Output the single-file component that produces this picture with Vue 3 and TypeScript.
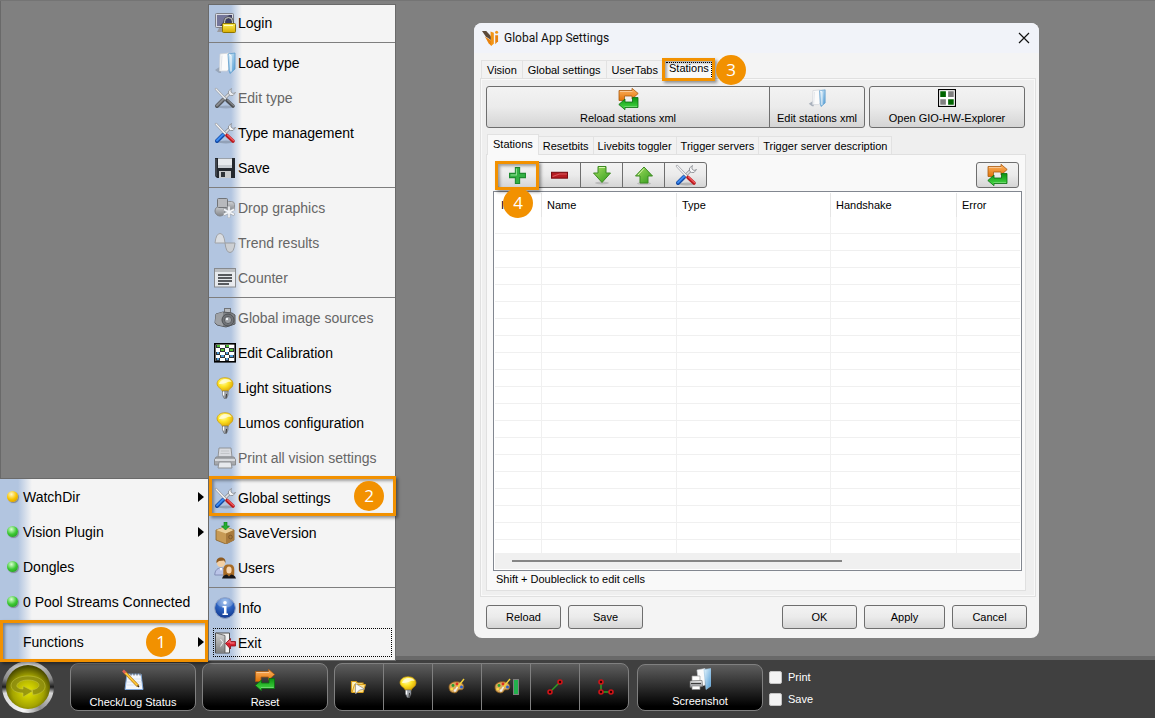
<script setup lang="ts">
import { ref } from 'vue'

interface MenuEntry {
  label: string
  icon: string
  disabled?: boolean
  marker?: string
  focused?: boolean
}

const functionGroups: MenuEntry[][] = [
  [{ label: 'Login', icon: 'login' }],
  [
    { label: 'Load type', icon: 'folder' },
    { label: 'Edit type', icon: 'tools', disabled: true },
    { label: 'Type management', icon: 'tools' },
    { label: 'Save', icon: 'floppy' },
  ],
  [
    { label: 'Drop graphics', icon: 'shapes', disabled: true },
    { label: 'Trend results', icon: 'wave', disabled: true },
    { label: 'Counter', icon: 'list', disabled: true },
  ],
  [
    { label: 'Global image sources', icon: 'camera', disabled: true },
    { label: 'Edit Calibration', icon: 'calibration' },
    { label: 'Light situations', icon: 'bulb' },
    { label: 'Lumos configuration', icon: 'bulb' },
    { label: 'Print all vision settings', icon: 'printer', disabled: true },
  ],
  [
    { label: 'Global settings', icon: 'tools', marker: '2' },
    { label: 'SaveVersion', icon: 'box' },
    { label: 'Users', icon: 'users' },
  ],
  [
    { label: 'Info', icon: 'info' },
    { label: 'Exit', icon: 'exit', focused: true },
  ],
]

const statusItems = [
  { label: 'WatchDir', led: 'amber', arrow: true },
  { label: 'Vision Plugin', led: 'green', arrow: true },
  { label: 'Dongles', led: 'green', arrow: false },
  { label: '0 Pool Streams Connected', led: 'green', arrow: false },
]

const mainTabs = ['Vision', 'Global settings', 'UserTabs', 'Stations']
const stationTabs = ['Stations', 'Resetbits', 'Livebits toggler', 'Trigger servers', 'Trigger server description']
const mainTab = ref('Stations')
const stationTab = ref('Stations')

const rowTools = [
  { icon: 'plus', label: 'Add station', marker: '4' },
  { icon: 'minus', label: 'Remove station' },
  { icon: 'down', label: 'Move down' },
  { icon: 'up', label: 'Move up' },
  { icon: 'tools', label: 'Configure station' },
]
const barTools = [
  { icon: 'run', label: 'Open and run' },
  { icon: 'bulb', label: 'Light' },
  { icon: 'palette', label: 'Palette' },
  { icon: 'palettebar', label: 'Palette bar' },
  { icon: 'line', label: 'Line' },
  { icon: 'angle', label: 'Angle' },
]
const columns = ['ID', 'Name', 'Type', 'Handshake', 'Error']
const emptyRows = 60
const printShot = ref(false)
const saveShot = ref(false)
</script>

<template>
  <svg class="sprite" aria-hidden="true">
    <defs>
      <linearGradient id="gOrange" x1="0" y1="0" x2="0" y2="1"><stop offset="0" stop-color="#ffb464" /><stop offset="1" stop-color="#e07408" /></linearGradient>
      <linearGradient id="gGreen" x1="0" y1="0" x2="0" y2="1"><stop offset="0" stop-color="#0c9210" /><stop offset="1" stop-color="#4be04a" /></linearGradient>
      <linearGradient id="gArrow" x1="0" y1="0" x2="1" y2="1"><stop offset="0" stop-color="#a6e060" /><stop offset="1" stop-color="#2f9a1c" /></linearGradient>
      <linearGradient id="gSteel" x1="0" y1="0" x2="0" y2="1"><stop offset="0" stop-color="#fdfdfd" /><stop offset="1" stop-color="#8a8d92" /></linearGradient>
      <linearGradient id="gDark" x1="0" y1="0" x2="0" y2="1"><stop offset="0" stop-color="#d4d4d4" /><stop offset="1" stop-color="#7c7c7c" /></linearGradient>
      <linearGradient id="gGold" x1="0" y1="0" x2="0" y2="1"><stop offset="0" stop-color="#fff25a" /><stop offset="1" stop-color="#d8ac00" /></linearGradient>
      <linearGradient id="gFold" x1="0" y1="0" x2="1" y2="1"><stop offset="0" stop-color="#e4f4fd" /><stop offset="1" stop-color="#4c98d2" /></linearGradient>
      <radialGradient id="gBulb" cx=".4" cy=".3" r=".7"><stop offset="0" stop-color="#fffbc0" /><stop offset=".45" stop-color="#ffe628" /><stop offset="1" stop-color="#dca400" /></radialGradient>
      <radialGradient id="gInfo" cx=".5" cy=".2" r=".8"><stop offset="0" stop-color="#8fb8ec" /><stop offset=".5" stop-color="#2c62c0" /><stop offset="1" stop-color="#12388e" /></radialGradient>
    </defs>

    <symbol id="i-login" viewBox="0 0 22 22">
      <path d="M5 16h7l1 4H3z" fill="#9a9a9e" />
      <rect x="1.500" y="1.500" width="18" height="14" rx="1" fill="#d8dae2" stroke="#7e8088" />
      <rect x="3" y="3" width="15" height="11" fill="#3c3e66" />
      <path d="M3 3h12L6 14H3z" fill="#74769a" />
      <path d="M10.500 13V9.500a4 4 0 0 1 8 0V13" fill="none" stroke="#55565a" stroke-width="2.600" />
      <path d="M10.500 13V9.500a4 4 0 0 1 8 0V13" fill="none" stroke="#c9cace" stroke-width="1" />
      <rect x="8.500" y="11.500" width="13" height="9" rx="1" fill="url(#gGold)" stroke="#8e7400" />
      <path d="M10 13.500h9" stroke="#fffac0" />
    </symbol>
    <symbol id="i-folder" viewBox="0 0 22 22">
      <path d="M1 18l6-4v7H5z" fill="#8d98a8" opacity=".7" />
      <path d="M6 2l9-1v16l-2 2H5.500z" fill="#fbfbfb" stroke="#cfd3d8" stroke-width=".8" />
      <path d="M8 3.500L7 18" stroke="#dfe3e8" />
      <path d="M14 2l7-1v16l-5 4.500-1-3z" fill="url(#gFold)" stroke="#5d9ccc" stroke-width=".8" />
      <path d="M15 2.500l2 1v16" fill="none" stroke="#fff" />
    </symbol>
    <symbol id="i-tools" viewBox="0 0 22 22">
      <ellipse cx="12" cy="20" rx="8" ry="1.500" fill="#000" opacity=".18" />
      <path d="M10 12l6-6" stroke="#85888d" stroke-width="3" />
      <path d="M10 12l6-6" stroke="#e4e6e9" stroke-width="1.700" />
      <path d="M17.500 1.500l-3 2.500v3l2 1.500h2.500l2.500-3-2.500 1-2-1.500v-2z" fill="#f4f5f6" stroke="#85888e" stroke-width=".8" />
      <path d="M9 13l-6 6" stroke="#1248a4" stroke-width="4" stroke-linecap="round" />
      <path d="M9 12.500l-6 6" stroke="#3c8cf2" stroke-width="2" stroke-linecap="round" />
      <path d="M2 2l10 10.500" stroke="#83868b" stroke-width="2.400" stroke-linecap="round" />
      <path d="M2 2l10 10.500" stroke="#f6f6f8" stroke-width="1.400" stroke-linecap="round" />
      <path d="M13 13.500l6 5.500" stroke="#b8191e" stroke-width="3.600" stroke-linecap="round" />
      <path d="M13.500 13l6 5.500" stroke="#f0585c" stroke-width="1.400" stroke-linecap="round" />
    </symbol>
    <symbol id="i-floppy" viewBox="0 0 22 22">
      <path d="M1 1h20v20H3l-2-2z" fill="#24282e" />
      <path d="M4 1h14v10H4z" fill="#e6e9ec" />
      <path d="M4 8h14v3H4z" fill="#c8cdd2" />
      <path d="M4 1.500h14" stroke="#9ba2aa" />
      <rect x="5" y="14" width="12" height="7" fill="#c9cbcd" />
      <rect x="7" y="15" width="4" height="5" fill="#2f3338" />
      <path d="M2 2v17" stroke="#5c636d" />
    </symbol>
    <symbol id="i-shapes" viewBox="0 0 22 22">
      <circle cx="6" cy="14" r="5" fill="url(#gDark)" stroke="#777" />
      <rect x="11.500" y="4.500" width="9" height="9" rx="3" fill="url(#gDark)" stroke="#888" />
      <rect x="3.500" y="1.500" width="10" height="9" rx="1" fill="#b8b8b8" stroke="#666" />
      <path d="M15 9v12M9.500 12l11 6M20.500 12l-11 6" stroke="#a8a8a8" stroke-width="2.600" />
      <path d="M15 9.500v11M10 12.500l10 5M20 12.500l-10 5" stroke="#fff" stroke-width="1.600" />
    </symbol>
    <symbol id="i-wave" viewBox="0 0 22 22">
      <path d="M1 11Q2 1.500 6 1.500T11 11z" fill="#e2e3e5" stroke="#9a9da2" />
      <path d="M11 11Q12 20.500 16 20.500T21 11z" fill="#d0d1d3" stroke="#94979c" />
    </symbol>
    <symbol id="i-list" viewBox="0 0 22 22">
      <rect x=".5" y="1.500" width="21" height="18.500" fill="#f0f0f0" stroke="#808080" />
      <path d="M1 3.500h20" stroke="#bdbdbd" stroke-width="3" />
      <path d="M4 8h14M4 11h14M4 14h14M4 17h11" stroke="#484848" stroke-width="2" />
    </symbol>
    <symbol id="i-camera" viewBox="0 0 22 22">
      <rect x="10.500" y="1.500" width="6" height="4" fill="#bbb" stroke="#666" />
      <path d="M2 7l7-2 9 1 3 2v9l-9 3-9-2-2-2z" fill="#7a7a7a" stroke="#484848" />
      <path d="M2 7l7-2v14l-6-1.500-2-2z" fill="#9c9c9c" />
      <circle cx="14" cy="13" r="6" fill="#666" stroke="#3c3c3c" />
      <circle cx="14" cy="13" r="3.600" fill="#989898" stroke="#4c4c4c" />
      <circle cx="13" cy="12" r="1.200" fill="#fff" />
    </symbol>
    <symbol id="i-calibration" viewBox="0 0 22 22">
      <rect x=".8" y="1.800" width="20.400" height="18" fill="#fff" stroke="#000" stroke-width="1.600" />
      <path d="M2 3h4v3H2zM11 3h4v3h-4zM6 6h5v4H6zM15 6h5v4h-5zM2 10h4v3H2zM11 10h4v3h-4zM6 13h5v3H6zM15 13h5v3h-5zM2 16h4v3H2zM11 16h4v3h-4z" fill="#30363c" />
      <path d="M3 3h3v2H3zM12 3h3v2h-3zM7 7h3v2H7zM16 7h3v2h-3z" fill="#54c032" />
      <path d="M3 10h2v2H3zM12 10h2v2h-2zM7 13h3v2H7zM16 13h3v2h-3zM3 16h2v2H3zM12 16h2v2h-2z" fill="#4f9bd8" />
    </symbol>
    <symbol id="i-bulb" viewBox="0 0 22 22">
      <path d="M11 .7c5 0 8 2.800 8 6.300 0 4-4.500 4.500-5.300 8H8.800C8 11.500 3 10.500 3 7 3 3.500 6 .7 11 .7z" fill="url(#gBulb)" stroke="#c99a10" stroke-width=".7" />
      <path d="M5 7c1-3.500 4-5 7-5 3 0 5 1 5.500 3-3-1.500-6 2-12.500 2z" fill="#fffde0" opacity=".8" />
      <path d="M8.500 14h5.500v4l-1.500 3.500h-2.300L8.500 18z" fill="#9fa3a9" stroke="#5e6166" stroke-width=".6" />
      <path d="M9.500 14.500v4" stroke="#fff" stroke-width="1.400" />
      <path d="M12.500 17l-.5 4" stroke="#333" />
    </symbol>
    <symbol id="i-printer" viewBox="0 0 22 22">
      <path d="M5 1h12l1 9H4z" fill="#e0e0e0" stroke="#8a8a8a" />
      <path d="M7 4h8M6.500 6.500h9" stroke="#c5c5c5" />
      <path d="M2 10h18l1.500 3v5h-21v-5z" fill="#a4a4a4" stroke="#808080" />
      <path d="M1 13h20" stroke="#dedede" stroke-width="2" />
      <path d="M5 15h12l1 6H4z" fill="#f0f0f0" stroke="#888" />
    </symbol>
    <symbol id="i-box" viewBox="0 0 22 22">
      <path d="M2 8l9-3 9 3v10l-8 4-10-4z" fill="#c79a55" stroke="#85602a" stroke-width=".8" />
      <path d="M2 8l9-3 9 3-8 3.500z" fill="#ecd09a" />
      <path d="M12 11.500L20 8v10l-8 4z" fill="#a87a3c" />
      <circle cx="16.500" cy="15" r="1.800" fill="none" stroke="#80592a" />
      <path d="M10 0h3v4h2.500l-4 4-4-4H10z" fill="#24b032" stroke="#0b761a" stroke-width=".6" />
    </symbol>
    <symbol id="i-users" viewBox="0 0 22 22">
      <path d="M.8 18c0-5 3-7 6.200-7 3.500 0 6 2 6 7z" fill="#bac4e8" stroke="#7680ac" stroke-width=".8" />
      <path d="M5.500 11L7 14l1.500-3z" fill="#fff" />
      <circle cx="7" cy="6" r="4" fill="#f3cfa4" />
      <path d="M2.500 6c-.5-4 2-5.500 4.500-5.500S12 2 11.500 6L10 3.500 5 4z" fill="#8e5a20" />
      <path d="M9.500 19.500c-1-11 1-12 5.500-12s6 1 5 12z" fill="#a86b24" />
      <ellipse cx="15" cy="13" rx="2.600" ry="3.500" fill="#f6d4b0" />
      <path d="M8 21.500c1-3 3-4 5-4l2 2 2-2c2 0 4 1 5 4z" fill="#16161a" />
    </symbol>
    <symbol id="i-info" viewBox="0 0 22 22">
      <circle cx="11" cy="11" r="10.400" fill="url(#gInfo)" stroke="#94a4c4" />
      <ellipse cx="11" cy="6" rx="8" ry="4.500" fill="#fff" opacity=".22" />
      <circle cx="11" cy="5.800" r="1.800" fill="#fff" />
      <path d="M8.500 9h4v7.500h1.500v1.500H8.500v-1.500H10V10.500H8.500z" fill="#fff" />
    </symbol>
    <symbol id="i-exit" viewBox="0 0 22 22">
      <path d="M1.500 1h14v20h-14z" fill="#f2f2f2" stroke="#4c4c4c" />
      <path d="M2 1l9 2.500V21H2z" fill="url(#gDark)" />
      <path d="M2 1l9 2.500V21" fill="none" stroke="#555" stroke-width=".8" />
      <path d="M6.500 7l2.500 3.500-2.500 4" fill="none" stroke="#eee" />
      <path d="M11.500 11.500l5-5v3h5v4.500h-5v3z" fill="#d81f2e" stroke="#8a0a14" stroke-width=".8" />
      <path d="M13.500 11l2.500-2.500V11h4.500" fill="none" stroke="#f7858c" />
    </symbol>
    <symbol id="i-sync" viewBox="0 0 20 22">
      <path d="M.5 2.500h13V.3l6.200 5.200-6.200 5.500V8H6v4.500H.5z" fill="url(#gOrange)" stroke="#a85a10" stroke-width=".8" />
      <path d="M19.500 19.500h-13v2.200L.3 16.500l6.200-5.500v3H14V9.500h5.500z" fill="url(#gGreen)" stroke="#0a6c10" stroke-width=".8" />
      <path d="M1.500 3.500H14" stroke="#fff" opacity=".4" />
      <path d="M6 18.500h12.500" stroke="#fff" opacity=".25" />
    </symbol>
    <symbol id="i-plus" viewBox="0 0 16 16">
      <path d="M6 .5h4V6h5.500v4H10v5.500H6V10H.5V6H6z" fill="#34b044" stroke="#1d8a2f" />
      <path d="M7 1.500v6H1.500" fill="none" stroke="#8fe094" />
    </symbol>
    <symbol id="i-minus" viewBox="0 0 16 16">
      <rect x=".5" y="5" width="15" height="5.500" fill="#b81c22" stroke="#7a0d12" />
      <path d="M1.500 9L8 6.500h7" fill="none" stroke="#d8585c" />
    </symbol>
    <symbol id="i-down" viewBox="0 0 20 20">
      <ellipse cx="10" cy="18" rx="7" ry="1.500" fill="#000" opacity=".15" />
      <path d="M6 1.500h8V8h4.500L10 17.500 1.500 8H6z" fill="url(#gArrow)" stroke="#3c8a22" />
      <path d="M7 2.500h6" stroke="#d8f5b0" />
    </symbol>
    <symbol id="i-up" viewBox="0 0 20 20">
      <ellipse cx="10" cy="18.500" rx="7" ry="1.300" fill="#000" opacity=".15" />
      <path d="M6 18v-7H1.500L10 2l8.500 9H14v7z" fill="url(#gArrow)" stroke="#3c8a22" />
      <path d="M4 10l6-6.500" stroke="#d8f5b0" />
    </symbol>
    <symbol id="i-hw" viewBox="0 0 16 16">
      <rect x=".5" y=".5" width="15" height="15" fill="#fff" stroke="#000" />
      <path d="M2 2h5v5H2zM9 9h5v5H9z" fill="#006400" />
      <path d="M9 2h5v5H9zM2 9h5v5H2z" fill="#808080" />
    </symbol>
    <symbol id="i-notepad" viewBox="0 0 22 22">
      <path d="M5 5h14l2 15.500H3z" fill="#f4f7fc" stroke="#7fa6d8" />
      <path d="M5.500 10h14M5 13h15M4.500 16h15.500" stroke="#d3deee" stroke-width=".8" />
      <path d="M9 3.500v3M12 3.500v3M15 3.500v3M18 3.500v3" stroke="#555" />
      <path d="M3 3.500L16 17" stroke="#b87812" stroke-width="3" />
      <path d="M3 3.500L16 17" stroke="#ffcb3c" stroke-width="1.800" />
      <path d="M1 1.500l2.500 2.500" stroke="#e06052" stroke-width="2.600" />
      <path d="M15.500 16.500l1.500 1.500" stroke="#3b2a14" stroke-width="1.400" />
    </symbol>
    <symbol id="i-run" viewBox="0 0 22 22">
      <path d="M3.500 5.500H8L9.500 7H15v9H3.500z" fill="#fff4c0" stroke="#d9a01c" stroke-width="1.200" />
      <path d="M6.500 8.500h11l-2.500 8H4z" fill="#ffe08a" stroke="#d9a01c" />
      <path d="M7.500 7.500l9 5.500-5 1-4 4z" fill="#fafafa" stroke="#8a8a8a" stroke-width=".7" />
    </symbol>
    <symbol id="i-palette" viewBox="0 0 22 22">
      <path d="M3 11c0-4 5-6 10-5 4 1 6 4 4 7-1.500 1.500-4 0-5 1.500-.5 2-3 3-5.500 2C4 16 3 13.500 3 11z" fill="#dba95c" stroke="#875a1c" stroke-width=".8" />
      <circle cx="7" cy="9.500" r="1.400" fill="#28a030" /><circle cx="11" cy="8" r="1.400" fill="#e03020" />
      <circle cx="5.800" cy="13" r="1.300" fill="#ffe040" /><circle cx="15.500" cy="11" r="1.500" fill="#2c60c8" /><circle cx="9" cy="14.500" r="1.300" fill="#eee" />
      <path d="M18 3l-8 10" stroke="#f4d23c" stroke-width="1.400" /><path d="M11.500 11L9.500 14" stroke="#eee" stroke-width="1.400" />
    </symbol>
    <symbol id="i-palettebar" viewBox="0 0 28 22">
      <use href="#i-palette" x="0" y="0" width="22" height="22" />
      <rect x="21.500" y="3.500" width="5" height="15" fill="#22b04c" stroke="#7f7f7f" />
    </symbol>
    <symbol id="i-line" viewBox="0 0 22 22">
      <path d="M6 16L16 6" stroke="#2f9e24" stroke-width="1.500" />
      <circle cx="6" cy="16" r="2" fill="#300" stroke="#d01418" stroke-width="1.600" /><circle cx="16" cy="6" r="2" fill="#300" stroke="#d01418" stroke-width="1.600" />
    </symbol>
    <symbol id="i-angle" viewBox="0 0 22 22">
      <path d="M8 6v10h10" fill="none" stroke="#2f9e24" stroke-width="1.500" />
      <circle cx="8" cy="6" r="2" fill="#300" stroke="#d01418" stroke-width="1.600" /><circle cx="8" cy="16" r="2" fill="#300" stroke="#d01418" stroke-width="1.600" /><circle cx="18" cy="16" r="2" fill="#300" stroke="#d01418" stroke-width="1.600" />
    </symbol>
    <symbol id="i-shot" viewBox="0 0 22 22">
      <path d="M8 2l8-1.500V17l-6 2z" fill="#fafafa" stroke="#ccd2d8" stroke-width=".6" />
      <path d="M15 1.500l7-1V18l-5 3.500z" fill="url(#gFold)" stroke="#9cc4e0" stroke-width=".6" />
      <path d="M3 8h8v5H3z" fill="#fff" stroke="#999" stroke-width=".7" />
      <path d="M1 13l12-.5.5 6L1 19.500z" fill="url(#gSteel)" stroke="#666" stroke-width=".7" />
      <path d="M2 15.500h10" stroke="#3c3c3c" stroke-width="1.300" />
      <path d="M3 18h8v3.500H3z" fill="#fff" stroke="#888" stroke-width=".7" />
    </symbol>
  </svg>

  <div class="screen">
    <main class="desktop">
      <section class="dialog" role="dialog" aria-labelledby="dlgTitle">
        <header class="titlebar">
          <svg class="logo" viewBox="0 0 18 18" aria-hidden="true">
            <path d="M0 1h4.500l5 5.500v4L4 7z" fill="#5c4a3a" />
            <path d="M3 7l7 4.500V17l-3-3z" fill="#e8820e" />
            <path d="M9 1.500l3.500 1.500v11.500L9.500 17z" fill="#f29414" />
            <path d="M14 5.500h3V12l-3 3z" fill="#e8820e" />
            <circle cx="15.500" cy="2.500" r="1.600" fill="#f29414" />
          </svg>
          <h1 id="dlgTitle">Global App Settings</h1>
          <button class="close" aria-label="Close"><svg viewBox="0 0 12 12"><path d="M1 1l10 10M11 1L1 11" stroke="#111" stroke-width="1.200" /></svg></button>
        </header>

        <div class="tabs main-tabs" role="tablist">
          <button v-for="t in mainTabs" :key="t" role="tab" class="tab" :class="{ active: mainTab === t }" :aria-selected="mainTab === t" @click="mainTab = t">
            {{ t }}
            <span v-if="t === 'Stations'" class="frame" aria-hidden="true"></span>
            <span v-if="t === 'Stations'" class="badge">3</span>
          </button>
        </div>

        <div class="panel outer">
          <div class="actions">
            <div class="joined">
              <button class="btn tall reload"><svg class="sync"><use href="#i-sync" /></svg>Reload stations xml</button>
              <button class="btn tall edit"><svg class="small"><use href="#i-folder" /></svg>Edit stations xml</button>
            </div>
            <button class="btn tall explorer"><svg class="small"><use href="#i-hw" /></svg>Open GIO-HW-Explorer</button>
          </div>

          <div class="tabs sub-tabs" role="tablist">
            <button v-for="t in stationTabs" :key="t" role="tab" class="tab" :class="{ active: stationTab === t }" :aria-selected="stationTab === t" @click="stationTab = t">{{ t }}</button>
          </div>

          <div class="panel inner">
            <div class="toolrow">
              <div class="joined">
                <button v-for="r in rowTools" :key="r.icon" class="btn tool" :aria-label="r.label">
                  <svg :class="r.icon"><use :href="'#i-' + r.icon" /></svg>
                  <template v-if="r.marker">
                    <span class="frame" aria-hidden="true"></span>
                    <span class="badge">{{ r.marker }}</span>
                  </template>
                </button>
              </div>
              <button class="btn tool" aria-label="Refresh"><svg class="sync"><use href="#i-sync" /></svg></button>
            </div>

            <div class="grid">
              <div class="grid-view">
                <table>
                  <colgroup><col class="c-id" /><col class="c-name" /><col class="c-type" /><col class="c-hand" /><col /></colgroup>
                  <thead><tr><th v-for="c in columns" :key="c" scope="col">{{ c }}</th></tr></thead>
                  <tbody><tr v-for="n in emptyRows" :key="n"><td v-for="c in columns" :key="c"></td></tr></tbody>
                </table>
              </div>
              <div class="scroll"><div class="thumb"></div></div>
            </div>
            <p class="hint">Shift + Doubleclick to edit cells</p>
          </div>
        </div>

        <footer class="buttons">
          <button class="btn">Reload</button>
          <button class="btn">Save</button>
          <span class="spacer"></span>
          <button class="btn">OK</button>
          <button class="btn apply">Apply</button>
          <button class="btn">Cancel</button>
        </footer>
      </section>
    </main>

    <nav class="menu status-menu" aria-label="Status">
      <ul>
        <li v-for="s in statusItems" :key="s.label">
          <button class="item"><span class="led" :class="s.led"></span><span class="label">{{ s.label }}</span><svg v-if="s.arrow" class="arrow" viewBox="0 0 6 10"><path d="M0 0l6 5-6 5z" /></svg></button>
        </li>
      </ul>
      <ul>
        <li><button class="item"><span class="led"></span><span class="label">Functions</span><svg class="arrow" viewBox="0 0 6 10"><path d="M0 0l6 5-6 5z" /></svg><span class="frame" aria-hidden="true"></span><span class="badge">1</span></button></li>
      </ul>
    </nav>

    <nav class="menu function-menu" aria-label="Functions">
      <ul v-for="(g, i) in functionGroups" :key="i">
        <li v-for="e in g" :key="e.label">
          <button class="item" :class="{ focused: e.focused }" :disabled="e.disabled">
            <svg class="icon"><use :href="'#i-' + e.icon" /></svg><span class="label">{{ e.label }}</span>
            <template v-if="e.marker">
              <span class="frame" aria-hidden="true"></span>
              <span class="badge">{{ e.marker }}</span>
            </template>
          </button>
        </li>
      </ul>
    </nav>

    <footer class="taskbar">
      <button class="orb" aria-label="Cycle">
        <svg viewBox="0 0 42 42">
          <path d="M26 29c8-1 13-5 12-10-1-6-9-9-17-9S5 13 4 19c0 5 5 8 12 8v4l10-6-10-5v3c-4 0-7-2-6-4 1-3 6-5 11-5s11 2 11 5c0 2-2 4-7 5z" fill="#8e8e10" stroke="#c8c84a" stroke-width=".6" opacity=".85" />
        </svg>
      </button>
      <button class="dark wide"><svg class="icon"><use href="#i-notepad" /></svg>Check/Log Status</button>
      <button class="dark wide"><svg class="icon"><use href="#i-sync" /></svg>Reset</button>
      <div class="strip">
        <button v-for="b in barTools" :key="b.icon" class="dark" :aria-label="b.label"><svg :class="b.icon"><use :href="'#i-' + b.icon" /></svg></button>
      </div>
      <button class="dark wide shot"><svg class="icon"><use href="#i-shot" /></svg>Screenshot</button>
      <div class="checks">
        <label><input v-model="printShot" type="checkbox" />Print</label>
        <label><input v-model="saveShot" type="checkbox" />Save</label>
      </div>
    </footer>
  </div>
</template>

<style>
body { margin: 0; background: #808080; }
</style>

<style scoped>
* { box-sizing: border-box; }
button { font: inherit; color: inherit; margin: 0; padding: 0; border: 0; background: none; }
svg { display: block; flex: none; }
ul { list-style: none; margin: 0; padding: 0; }
.sprite { position: absolute; width: 0; height: 0; }

.screen {
  position: relative;
  display: flex;
  flex-direction: column;
  min-height: 100vh;
  background: #808080;
  border-top: 1px solid #747474;
  font: 11px/16px "Liberation Sans", Arial, sans-serif;
  color: #000;
}
.desktop {
  flex: 1;
  display: flex;
  flex-direction: column;
  padding: 22px 116px 18px 473px;
  border-left: 1px solid #696969;
  border-bottom: 4px solid #696969;
}

/* numbered markers */
.frame {
  position: absolute;
  border: 3px solid #f29100;
  box-shadow: 2px 2px 3px rgba(0, 0, 0, .4), inset 2px 2px 3px rgba(0, 0, 0, .35);
  pointer-events: none;
}
.badge {
  position: absolute;
  z-index: 2;
  width: 30px;
  height: 30px;
  border-radius: 50%;
  background: #f29100;
  color: #fff;
  font: 17px/30px "Open Sans", sans-serif;
  text-align: center;
}

/* dialog */
.dialog {
  flex: 1;
  display: flex;
  flex-direction: column;
  background: #f4f4f4;
  border-radius: 8px;
  padding: 0 3px 9px 6px;
}
.titlebar {
  display: flex;
  align-items: center;
  gap: 5px;
  height: 30px;
  margin: 0 -3px 0 -6px;
  padding: 0 9px 0 8px;
  background: #f1f3f9;
  border-radius: 8px 8px 0 0;
}
.logo { width: 17px; height: 17px; }
h1 { flex: 1; margin: 0; font: 12px/16px Roboto, "Segoe UI", sans-serif; color: #111; }
.close { width: 12px; height: 12px; }
.close svg { width: 12px; height: 12px; }

.tabs { display: flex; align-items: flex-end; position: relative; z-index: 1; }
.main-tabs { height: 25px; }
.tab {
  height: 18px;
  padding: 1px 5px 0;
  border: 1px solid #e2e2e2;
  border-bottom: 0;
  margin-left: -1px;
  background: #f2f2f2;
  line-height: 16px;
  position: relative;
}
.tab:first-child { margin-left: 1px; }
.tab.active { height: 21px; margin-bottom: -1px; background: #f9f9f9; padding-top: 0; padding-bottom: 2px; }
.main-tabs .active::after { content: ""; position: absolute; inset: 3px 2px 2px; border: 1px dotted #000; border-left: 0; border-bottom: 0; }
.tab .frame { left: -2px; top: -1px; right: -1px; bottom: -2px; z-index: 1; }
.tab .badge { left: 52px; top: -4px; }

.panel { display: flex; flex-direction: column; flex: 1; border: 2px solid #f9f9f9; outline: 1px solid #e0e0e0; outline-offset: -1px; }
.outer { background: #efefef; padding: 6px 9px 4px 4px; }
.actions { display: flex; gap: 4px; }
.joined { display: flex; }
.actions .joined { flex: 1; }
.btn {
  position: relative;
  display: flex;
  align-items: center;
  justify-content: center;
  height: 24px;
  width: 75px;
  border: 1px solid #6e6e6e;
  border-radius: 3px;
  background: linear-gradient(#f3f3f3, #ebebeb 50%, #d5d5d5);
}
.btn.tall { flex-direction: column; height: 42px; justify-content: flex-end; padding-bottom: 1px; }
.btn.tall .small { width: 18px; height: 18px; margin-bottom: 3px; }
.sync { width: 21px; height: 22px; }
.btn.reload { flex: 1; }
.btn.edit { width: 96px; }
.btn.explorer { width: 156px; }
.joined .btn:not(:first-child) { border-top-left-radius: 0; border-bottom-left-radius: 0; margin-left: -1px; }
.joined .btn:not(:last-child) { border-top-right-radius: 0; border-bottom-right-radius: 0; }

.sub-tabs { height: 26px; }
.sub-tabs .tab { padding-left: 4px; padding-right: 4px; }
.sub-tabs .tab:first-child { padding-left: 5px; padding-right: 5px; }
.inner { background: #f9f9f9; padding: 6px 2px 2px 5px; margin-right: -1px; }
.toolrow { display: flex; justify-content: space-between; padding: 0 3px; height: 26px; }
.btn.tool { width: 43px; height: 26px; }
.plus, .minus { width: 17px; height: 17px; }
.down, .up { width: 20px; height: 20px; }
.tools { width: 22px; height: 22px; }
.tool .frame { inset: -2px -1px -3px -2px; z-index: 1; }
.tool .badge { left: 6px; top: 25px; }

.grid { flex: 1; display: flex; flex-direction: column; margin-top: 3px; border: 1px solid #828790; background: #fff; padding: 1px; }
.grid-view { flex: 1 1 0; min-height: 120px; overflow: hidden; }
table { width: 100%; table-layout: fixed; border-collapse: separate; border-spacing: 0; }
.c-id { width: 47px; }
.c-name { width: 135px; }
.c-type { width: 154px; }
.c-hand { width: 126px; }
th { height: 24px; padding: 0 0 0 5px; font-weight: normal; text-align: left; border-right: 1px solid #e5e5e5; }
th:first-child { padding-left: 6px; }
td { height: 17px; padding: 0; border-right: 1px solid #f0f0f0; border-bottom: 1px solid #f0f0f0; }
th:last-child, td:last-child { border-right: 0; }
.scroll { height: 16px; background: #f0f0f0; padding: 7px 0 0 17px; }
.thumb { width: 65%; height: 2px; background: #868686; }
.hint { margin: 0; padding-left: 3px; height: 16px; }

.buttons { display: flex; gap: 7px; padding: 8px 9px 0 6px; }
.spacer { flex: 1; }
.btn.apply { width: 81px; }

/* menus */
.menu {
  position: absolute;
  bottom: 57px;
  border: 1px solid #6a6a6a;
  font-size: 14px;
  z-index: 3;
}
.status-menu { left: 0; bottom: 58px; width: 209px; border-left: 0; background: linear-gradient(90deg, #b2c5e0 18px, #f4f4f4 32px); }
.function-menu { left: 208px; width: 188px; background: linear-gradient(90deg, #b2c5e0 22px, #f4f4f4 33px); z-index: 4; }
.menu ul + ul { border-top: 1px solid #7e7e7e; margin-top: 2px; padding-top: 2px; }
.status-menu ul + ul { border-top-color: transparent; }
.item { position: relative; display: flex; align-items: center; width: 100%; height: 35px; text-align: left; }
.label { flex: 1; white-space: nowrap; }
.item:disabled { color: #666; }
.icon { width: 22px; height: 22px; }
.function-menu .icon { margin: 0 1px 0 5px; }
.function-menu .label { padding-left: 1px; }
.item:disabled .icon { filter: grayscale(1); opacity: .85; }
.focused::after { content: ""; position: absolute; inset: 3px 3px 3px 4px; border: 1px dotted #000; }
.led { width: 11px; height: 11px; margin: 0 5px 0 7px; border-radius: 50%; }
.amber { background: radial-gradient(circle at 40% 30%, #fff8c8, #f8c400 50%, #c68a00); box-shadow: 1px 1px 1px #7f8894; }
.green { background: radial-gradient(circle at 40% 30%, #d8ffd0, #3cc832 50%, #1c8a1c); box-shadow: 1px 1px 1px #7f8894; }
.arrow { width: 6px; height: 10px; margin-right: 4px; }
.function-menu .frame { inset: -4px -1px -1px 0; }
.function-menu .badge { right: 11px; top: 1px; }
.status-menu .frame { inset: -4px 0 -3px 0; }
.status-menu .badge { right: 32px; top: 3px; }

/* taskbar */
.taskbar { display: flex; align-items: center; gap: 6px; height: 58px; padding: 0 2px 4px; background: #404040; color: #fff; }
.orb {
  width: 52px;
  height: 52px;
  margin: 0 10px 0 0;
  border-radius: 50%;
  border: 4px solid transparent;
  background: radial-gradient(circle at 50% 60%, #e8e800, #a4a400 45%, #4a4a00 72%) padding-box, conic-gradient(#e8e8e8, #8a8a8a 70deg, #1c1c1c 90deg, #d8d8d8 105deg, #8e8e8e 150deg, #f4f4f4 190deg, #d8d8d8 255deg, #1c1c1c 270deg, #8a8a8a 290deg, #e8e8e8) border-box;
}
.orb svg { width: 42px; height: 42px; margin: 1px; }
.dark {
  display: flex;
  flex-direction: column;
  align-items: center;
  justify-content: center;
  height: 48px;
  border: 1px solid #808080;
  border-radius: 8px;
  background: linear-gradient(#5e5e5e, #000 92%);
}
.wide { width: 126px; justify-content: flex-end; gap: 3px; }
.wide .icon { width: 22px; height: 22px; }
.shot { height: 47px; margin-left: 2px; padding-bottom: 1px; }
.strip { display: flex; }
.strip .dark { width: 50px; border-radius: 0; margin-left: -1px; }
.strip .dark:first-child { margin-left: 0; border-radius: 8px 0 0 8px; }
.strip .dark:last-child { border-radius: 0 8px 8px 0; }
.strip svg { width: 22px; height: 22px; }
.strip .palettebar { width: 28px; }
.checks { display: flex; flex-direction: column; gap: 6px; padding-top: 2px; }
.checks label { display: flex; align-items: center; gap: 6px; }
.checks input { appearance: none; width: 13px; height: 13px; margin: 0; border: 1px solid #c4c4c4; border-radius: 2px; background: #f3f3f3; }
.checks input:checked { background: #4a90d9; }
</style>
